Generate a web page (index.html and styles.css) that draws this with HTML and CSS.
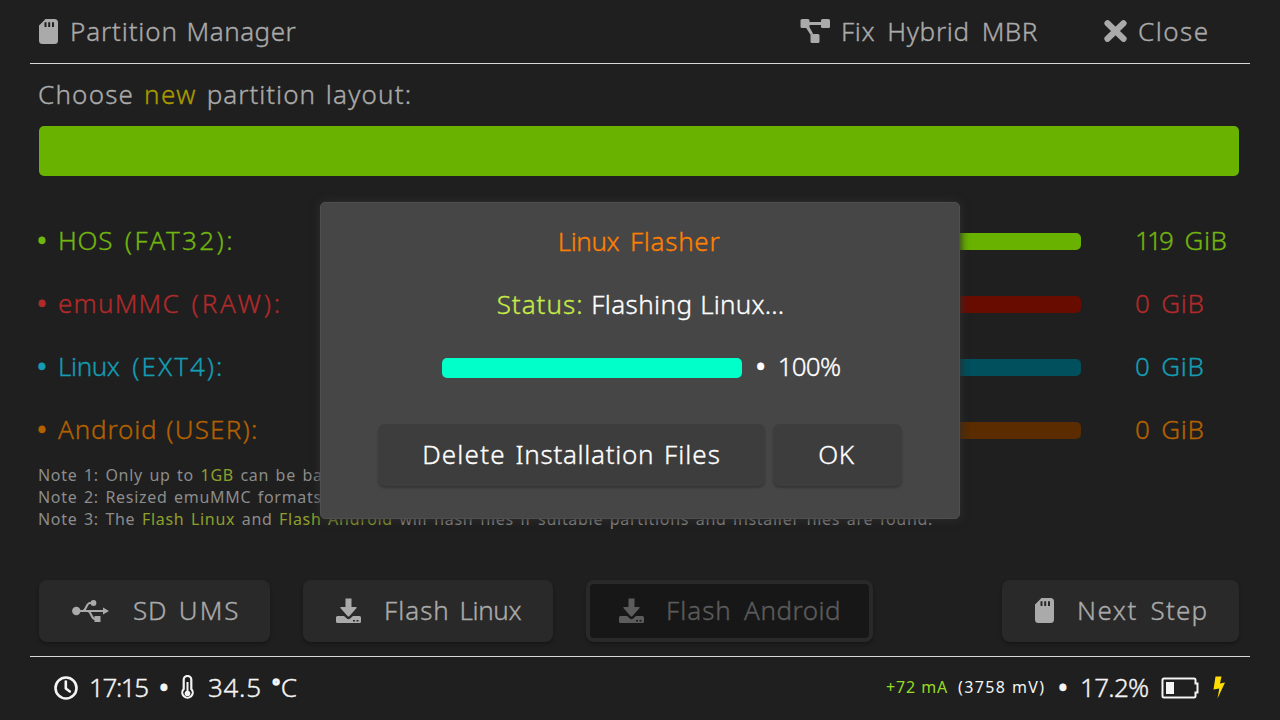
FILE: index.html
```html
<!DOCTYPE html>
<html lang="en">
<head>
<meta charset="utf-8">
<title>Partition Manager</title>
<link rel="stylesheet" href="styles.css">
</head>
<body>
<svg class="defs" aria-hidden="true">
  <symbol id="sd" viewBox="0 0 20 25"><path fill-rule="evenodd" d="M6.500 0H15.500a3.500 3.500 0 0 1 3.500 3.500v18A3.500 3.500 0 0 1 15.500 25H3.500A3.500 3.500 0 0 1 0 21.500V6.500ZM5.500 3.200V8H7.500V3.200ZM9.200 3.200V8h2V3.200ZM13 3.200V8h2V3.200Z"/></symbol>
  <symbol id="download" viewBox="0 0 26 26"><path d="M9.500.5h6v8.500h4.300q1.600 0 .6 1.300L13.500 18q-1 1-2 0L4.600 10.300Q3.600 9 5.200 9h4.300z"/><path fill-rule="evenodd" d="M1.500 18H8l2.800 2.600q1.700 1.300 3.400 0L17 18h6.500q1.500 0 1.500 1.500v4q0 1.500-1.500 1.500h-22Q0 25 0 23.500v-4Q0 18 1.500 18zM17 22v1.600h2V22zm3.500 0v1.600h2V22z"/></symbol>
</svg>
<div class="screen">
  <header class="topbar">
    <svg class="icon-sd" width="20" height="25"><use href="#sd"/></svg>
    <h1 class="title"><span class="t8">Partition</span> <span class="t5">Manager</span></h1>
    <div class="action fix">
      <svg width="30" height="24" viewBox="0 0 30 24"><rect x=".5" width="9" height="9" rx="1.500"/><rect x="21" width="9" height="9" rx="1.500"/><rect x="10.500" y="15" width="9" height="9" rx="1.500"/><path d="M9 3h12v3H9zM5.500 8l3-1.500 4.500 8-2.300 1.500z"/></svg>
      <span class="label"><span class="t7">Fix</span> <span class="t7">Hybrid</span> <span class="t5">MBR</span></span>
    </div>
    <div class="action close">
      <svg width="23" height="22" viewBox="0 0 23 22"><path class="cross" d="M3.500 3.300l16 15.500M19.500 3.300l-16 15.500"/></svg>
      <span class="label t15">Close</span>
    </div>
  </header>
  <main class="content">
    <p class="prompt"><span class="t12">Choose</span> <span class="new t15">new</span> <span class="t10">partition</span> <span class="t12">layout:</span></p>
    <div class="layout-bar"></div>
    <div class="rows">
      <div class="row hos"><span class="dot">•</span><span class="name mid"><span class="t7">HOS</span> <span class="t25">(FAT32):</span></span><span class="track"></span><span class="size"><span class="n119">119</span> GiB</span></div>
      <div class="row emu"><span class="dot">•</span><span class="name mid"><span class="t12">emuMMC</span> <span class="t28">(RAW):</span></span><span class="track"></span><span class="size">0 GiB</span></div>
      <div class="row lin"><span class="dot">•</span><span class="name wide"><span class="tn4">Linux</span> <span class="t20">(EXT4):</span></span><span class="track"></span><span class="size">0 GiB</span></div>
      <div class="row and"><span class="dot">•</span><span class="name"><span class="t8">Android</span> <span class="t12">(USER):</span></span><span class="track"></span><span class="size">0 GiB</span></div>
    </div>
    <div class="notes">
      <p>Note 1: Only up to <b>1GB</b> can be backed up.</p>
      <p>Note 2: Resized emuMMC formats the USER partition.</p>
      <p>Note 3: The <b>Flash Linux</b> and <b>Flash Android</b> will flash files if suitable partitions and installer files are found.</p>
    </div>
    <div class="buttons">
      <div class="btn ums"><svg width="37" height="24" viewBox="0 0 37 24"><circle cx="4.300" cy="12" r="4.200"/><path d="M31 8.500l6 3.500-6 3.500z"/><circle cx="21.500" cy="4" r="2.900"/><rect x="22.500" y="17" width="6" height="6"/><path class="wire" d="M5 12h27M10.500 12c4 0 3.500-8 7.500-8h4M15.500 12c4 0 3.500 8 7.500 8h2"/></svg><span><span class="t7">SD</span> <span class="t20">UMS</span></span></div>
      <div class="btn linux"><svg width="26" height="26"><use href="#download"/></svg><span><span class="t10">Flash</span> <span class="tn4">Linux</span></span></div>
      <div class="btn android"><svg width="26" height="26"><use href="#download"/></svg><span><span class="t10">Flash</span> <span class="t5">Android</span></span></div>
      <div class="btn next"><svg width="20" height="25"><use href="#sd"/></svg><span><span class="t15">Next</span> <span class="t12">Step</span></span></div>
    </div>
  </main>
  <footer class="status">
    <svg class="clock" width="24" height="24" viewBox="0 0 24 24"><circle cx="12" cy="12" r="10.500"/><path d="M11.800 5.500v7l4 3"/></svg>
    <span class="time">17:15</span>
    <span class="sep">•</span>
    <svg class="thermo" width="13" height="25" viewBox="0 0 13 25"><path class="shell" d="M2.700 14V4.800a3.700 3.700 0 0 1 7.600 0V14a5.200 5.200 0 1 1-7.600 0z"/><path class="mercury" d="M6.500 7v10"/><circle class="bulb" cx="6.500" cy="18.500" r="2.800"/></svg>
    <span class="temp"><span class="t7">34.5</span> <span class="deg">°</span>C</span>
    <span class="current">+72 mA</span>
    <span class="voltage">(3758 mV)</span>
    <span class="sep">•</span>
    <span class="percent">17.2%</span>
    <svg class="battery" width="38" height="22" viewBox="0 0 38 22"><path class="case" d="M3 1.500h30q1.500 0 1.500 1.500v3.500h2v9h-2V19q0 1.500-1.500 1.500H3Q1.500 20.500 1.500 19V3Q1.500 1.500 3 1.500z"/><path class="level" d="M5 5h8v12H5z"/></svg>
    <svg class="bolt" width="13" height="23" viewBox="0 0 13 23"><path d="M2.500.5h6L7 7.500l5-1L4.500 22.500l1.800-10L.5 13.500z"/></svg>
  </footer>
  <section class="modal">
    <h2 class="modal-title"><span class="tn4">Linux</span> <span class="t7">Flasher</span></h2>
    <p class="modal-status"><span class="key t10">Status:</span> <span class="t4">Flashing</span> <span class="t2">Linux...</span></p>
    <div class="progress"><span class="progress-bar"></span><span class="progress-dot">•</span><span class="tn8">100%</span></div>
    <div class="modal-buttons">
      <div class="mbtn del"><span><span class="t12">Delete</span> <span class="t7">Installation</span> <span class="t10">Files</span></span></div>
      <div class="mbtn ok"><span class="t5">OK</span></div>
    </div>
  </section>
</div>
</body>
</html>
```
FILE: styles.css
```css
* { box-sizing: border-box; }
body { margin: 0; background: #1f1f1f; }
h1, h2, p { margin: 0; font-weight: 300; font-size: 26px; }
svg { flex: none; fill: currentColor; }
.defs { display: none; }
.screen {
  position: relative;
  width: 1280px;
  height: 720px;
  padding: 0 30px;
  overflow: hidden;
  display: flex;
  flex-direction: column;
  background: #1f1f1f;
  color: #aaa;
  font: 300 26px/36px "Noto Sans", "Open Sans", sans-serif;
  -webkit-text-stroke: .35px currentColor;
  white-space: nowrap;
}

/* per-word tracking */
.tn8 { letter-spacing: -.8px; }
.tn4 { letter-spacing: -.4px; }
.t2 { letter-spacing: .2px; }
.t4 { letter-spacing: .4px; }
.t5 { letter-spacing: .5px; }
.t7 { letter-spacing: .7px; }
.t8 { letter-spacing: .85px; }
.t10 { letter-spacing: 1px; }
.t12 { letter-spacing: 1.2px; }
.t15 { letter-spacing: 1.5px; }
.t20 { letter-spacing: 2px; }
.t25 { letter-spacing: 2.4px; }
.t28 { letter-spacing: 2.8px; }

.topbar {
  height: 64px;
  flex: none;
  display: flex;
  align-items: center;
  padding: 0 0 1px 9px;
  border-bottom: 1px solid #d8d8d8;
}
.title { margin-left: 11px; word-spacing: 2px; flex: 1; }
.action { display: flex; align-items: center; }
.fix { width: 304px; gap: 11px; word-spacing: 5px; }
.close { width: 146px; gap: 11px; }
.cross { stroke: currentColor; stroke-width: 6.200; stroke-linecap: round; }

.content { height: 592px; flex: none; padding: 12px 11px 0 7px; }
.prompt { height: 50px; line-height: 36px; padding-left: 1px; word-spacing: 3px; }
.new { color: #aa9a00; }
.layout-bar { height: 50px; margin-left: 2px; border-radius: 5px; background: #69b200; }
.rows { padding-top: 33px; }
.row { height: 63px; display: flex; align-items: center; padding-bottom: 1px; }
.row > * { flex: none; }
.dot { width: 21px; }
.dot, .sep, .progress-dot { font-weight: 600; }
.name { width: 422px; word-spacing: 2px; }
.name.mid { word-spacing: 5px; }
.name.wide { word-spacing: 6px; }
.track { width: 601px; height: 17px; border-radius: 5px; margin-top: 2px; }
.size { margin-left: 54px; letter-spacing: .6px; word-spacing: 3.500px; }
.n119 { letter-spacing: -2.800px; }
.hos { color: #72b410; }
.hos .size { word-spacing: 6px; }
.hos .track { background: #69b200; }
.emu { color: #b02a2a; }
.emu .track { background: #690c00; }
.lin { color: #139cb4; }
.lin .track { background: #00505d; }
.and { color: #b36000; }
.and .track { background: #5a2c00; }

.notes { height: 119px; padding: 3px 0 0 1px; color: #8c8c8c; -webkit-text-stroke: 0; }
.notes p { font-size: 16px; line-height: 22px; letter-spacing: .7px; word-spacing: 1.700px; font-weight: 400; }
.notes b { font-weight: 400; color: #8ea02c; }

.buttons { display: flex; margin-left: 2px; }
.btn {
  height: 62px;
  display: flex;
  align-items: center;
  padding-bottom: 1px;
  border-radius: 8px;
  background: #292929;
  box-shadow: 0 2px 3px #171717;
}
.btn > span, .mbtn > span { padding-bottom: 2px; }
.ums { width: 231px; padding-left: 33px; gap: 24px; word-spacing: 5px; }
.linux { width: 250px; margin-left: 33px; padding-left: 33px; gap: 22px; word-spacing: 3px; }
.android {
  width: 287px;
  margin-left: 33px;
  padding-left: 29px;
  gap: 21px;
  word-spacing: 5.500px;
  border: 4px solid #292929;
  background: #171717;
  color: #5c5c5c;
}
.next { width: 237px; margin-left: auto; padding-left: 33px; gap: 22px; word-spacing: 6px; }
.wire { fill: none; stroke: currentColor; stroke-width: 2; }

.status {
  height: 64px;
  flex: none;
  display: flex;
  align-items: center;
  padding: 0 20px 2px 24px;
  border-top: 1px solid #d8d8d8;
  color: #f4f4f4;
}
.status > span { padding-bottom: 2px; }
.clock { fill: none; stroke: currentColor; stroke-width: 2.600; stroke-linecap: round; stroke-linejoin: round; margin-right: 11px; }
.time { width: 70px; letter-spacing: -1.400px; }
.sep { width: 22px; }
.thermo { margin-right: 14px; }
.shell { fill: none; stroke: currentColor; stroke-width: 2.200; }
.mercury { stroke: currentColor; stroke-width: 2; }
.temp { flex: 1; word-spacing: 4px; }
.deg { font-weight: 700; font-size: 17px; line-height: 10px; vertical-align: 5px; letter-spacing: 1px; -webkit-text-stroke: 1.500px; }
.current, .voltage { font-size: 16px; font-weight: 400; -webkit-text-stroke: 0; }
.current { color: #96dc23; width: 72px; letter-spacing: .9px; }
.voltage { width: 100px; letter-spacing: 1.4px; }
.percent { width: 81px; letter-spacing: -.7px; }
.battery { margin-right: 14px; }
.case { fill: none; stroke: currentColor; stroke-width: 2; }
.bolt { fill: #ffdd00; margin-right: 4px; }

.modal {
  position: absolute;
  left: 320px;
  top: 202px;
  width: 640px;
  height: 317px;
  padding-top: 20px;
  display: flex;
  flex-direction: column;
  align-items: center;
  border: 1px solid #4f4f4f;
  border-radius: 5px;
  background: #464646;
  box-shadow: 0 0 8px 1px #2c2c2c;
  color: #fff;
}
.modal-title { height: 63px; padding-right: 2px; color: #ff8000; word-spacing: 4px; }
.modal-status { height: 62px; padding-left: 1px; word-spacing: 1px; }
.key { color: #c7ea46; }
.progress { height: 76px; display: flex; align-items: flex-start; padding-left: 2px; }
.progress-bar { width: 300px; height: 20px; margin-top: 10px; border-radius: 5px; background: #00ffc9; }
.progress-dot { width: 22px; margin-left: 14px; }
.modal-buttons { display: flex; gap: 8px; }
.mbtn {
  height: 62px;
  display: flex;
  align-items: center;
  justify-content: center;
  padding-bottom: 1px;
  border-radius: 7px;
  background: #3d3d3d;
  box-shadow: 0 2px 2px #363636;
}
.del { width: 387px; word-spacing: 3px; }
.ok { width: 129px; padding-right: 2px; }
```
